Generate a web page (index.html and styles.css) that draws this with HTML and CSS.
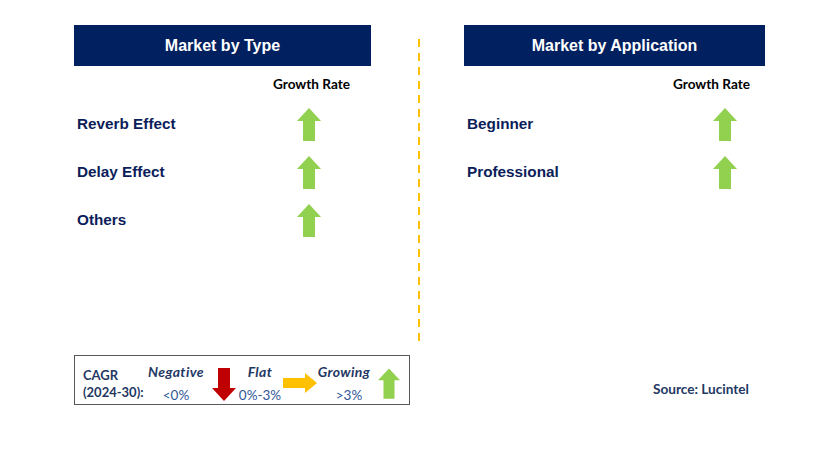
FILE: index.html
```html
<!DOCTYPE html>
<html>
<head>
<meta charset="utf-8">
<link rel="stylesheet" href="styles.css">
</head>
<body>
<div class="page">
  <div class="top">
    <section class="panel panel--type">
      <div class="panel-head">Market by Type</div>
      <div class="rate-head">Growth Rate</div>
      <div class="row"><span class="label">Reverb Effect</span><svg class="up" viewBox="0 0 24 33"><polygon points="12,0 24,13 18,13 18,33 6,33 6,13 0,13"/></svg></div>
      <div class="row"><span class="label">Delay Effect</span><svg class="up" viewBox="0 0 24 33"><polygon points="12,0 24,13 18,13 18,33 6,33 6,13 0,13"/></svg></div>
      <div class="row"><span class="label">Others</span><svg class="up" viewBox="0 0 24 33"><polygon points="12,0 24,13 18,13 18,33 6,33 6,13 0,13"/></svg></div>
    </section>
    <div class="divider"></div>
    <section class="panel panel--app">
      <div class="panel-head">Market by Application</div>
      <div class="rate-head">Growth Rate</div>
      <div class="row"><span class="label">Beginner</span><svg class="up" viewBox="0 0 24 33"><polygon points="12,0 24,13 18,13 18,33 6,33 6,13 0,13"/></svg></div>
      <div class="row"><span class="label">Professional</span><svg class="up" viewBox="0 0 24 33"><polygon points="12,0 24,13 18,13 18,33 6,33 6,13 0,13"/></svg></div>
    </section>
  </div>
  <div class="bottom">
    <div class="legend">
      <div class="cagr">CAGR<br>(2024-30):</div>
      <div class="lg lg--neg"><span class="lg-name">Negative</span><span class="lg-val">&lt;0%</span></div>
      <svg class="down" viewBox="0 0 24 33"><polygon points="6,0 18,0 18,20 24,20 12,33 0,20 6,20"/></svg>
      <div class="lg lg--flat"><span class="lg-name">Flat</span><span class="lg-val">0%-3%</span></div>
      <svg class="right" viewBox="0 0 34 20"><polygon points="0,5 22,5 22,0 34,10 22,20 22,15 0,15"/></svg>
      <div class="lg lg--grow"><span class="lg-name">Growing</span><span class="lg-val">&gt;3%</span></div>
      <svg class="up up--legend" viewBox="0 0 24 33"><polygon points="12,0 24,13 18,13 18,33 6,33 6,13 0,13"/></svg>
    </div>
    <div class="source">Source: Lucintel</div>
  </div>
</div>
</body>
</html>
```
FILE: styles.css
```css
html, body {
  margin: 0;
  padding: 0;
  background: #ffffff;
}
.page {
  width: 813px;
  height: 455px;
  box-sizing: border-box;
  padding: 25px 0 0 74px;
}
.top {
  display: flex;
  align-items: flex-start;
}
.panel--type { width: 297px; }
.panel--app { width: 301px; }
.divider {
  width: 0;
  height: 302px;
  margin: 14px 44px 0 47px;
  border-left: 2px dashed #ffc000;
  border-image: repeating-linear-gradient(to bottom, #ffc000 0 8px, transparent 8px 14px) 0 0 0 2;
}
.panel-head {
  height: 41px;
  background: #002060;
  color: #ffffff;
  font-family: "Liberation Sans", Arial, sans-serif;
  font-weight: 700;
  font-size: 16px;
  line-height: 41px;
  text-align: center;
}
.rate-head {
  margin-top: 9px;
  height: 18px;
  line-height: 18px;
  font-family: Lato, "Open Sans", sans-serif;
  font-weight: 700;
  font-size: 13.6px;
  color: #000000;
  text-align: right;
}
.panel--type .rate-head { padding-right: 21px; }
.panel--app .rate-head { padding-right: 15px; }
.row {
  height: 48px;
  display: flex;
  align-items: center;
  justify-content: space-between;
}
.rate-head + .row { margin-top: 7px; }
.label {
  padding-left: 3px;
  font-family: "Liberation Sans", Arial, sans-serif;
  font-weight: 700;
  font-size: 15.3px;
  color: #0c1d5a;
}
.up {
  width: 24px;
  height: 33px;
  fill: #92d050;
}
.panel--type .up { margin-right: 50px; }
.panel--app .up { margin-right: 28px; }
.bottom {
  display: flex;
  align-items: flex-start;
  margin-top: 14px;
}
.legend {
  width: 336px;
  height: 50px;
  box-sizing: border-box;
  border: 1.5px solid #595959;
  display: flex;
  align-items: flex-start;
  font-family: Lato, "Open Sans", sans-serif;
  font-size: 13px;
}
.cagr {
  width: 63px;
  padding: 11px 0 0 8px;
  line-height: 17px;
  font-weight: 700;
  color: #1f3864;
}
.lg {
  display: flex;
  flex-direction: column;
  align-items: center;
  padding-top: 8px;
}
.lg-name {
  line-height: 16px;
  font-size: 14px;
  letter-spacing: 0.4px;
  font-weight: 700;
  font-style: italic;
  color: #1f3864;
}
.lg-val {
  margin-top: 7px;
  line-height: 16px;
  font-size: 13.5px;
  color: #2f5597;
}
.lg--neg { width: 60px; }
.lg--flat { width: 46px; margin-left: 1px; }
.lg--grow { width: 54px; }
.lg--grow .lg-val { padding-left: 10px; }
.down {
  width: 24px;
  height: 33px;
  margin: 12px 0 0 6px;
  fill: #c00000;
}
.right {
  width: 34px;
  height: 20px;
  margin-top: 17px;
  fill: #ffc000;
}
.up--legend {
  width: 22px;
  height: 33px;
  margin: 11px 0 0 7px;
}
.source {
  margin: 25px 0 0 243px;
  line-height: 18px;
  font-family: Lato, "Open Sans", sans-serif;
  font-weight: 700;
  font-size: 13.6px;
  color: #1f3864;
}
```
